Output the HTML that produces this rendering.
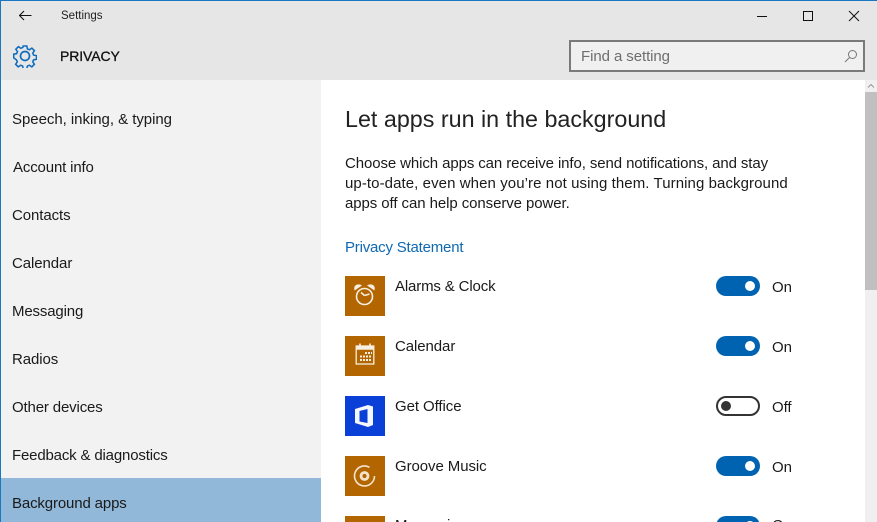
<!DOCTYPE html>
<html><head><meta charset="utf-8"><style>
html,body{margin:0;padding:0;width:877px;height:522px;overflow:hidden;background:#fff}
body{position:relative;font-family:"Liberation Sans",sans-serif;color:#1a1a1a}
div,span,svg{position:absolute}
.t{white-space:nowrap;line-height:20px;font-size:15px;letter-spacing:-.08px}
.n{left:12px}
.i{left:345px;width:40px;height:40px;background:#b36500}
.a{left:395px}
.s{left:716px;width:44px;height:20px;border-radius:10px;background:#0063b1}
.s i{position:absolute;left:29px;top:5px;width:10px;height:10px;border-radius:5px;background:#fff}
.l{left:772px}
</style></head><body>
<div style="left:0;top:0;width:877px;height:522px;overflow:hidden">
<div style="left:0;top:0;width:877px;height:80px;background:#e6e6e6"></div>
<div style="left:0;top:80px;width:321px;height:442px;background:#f2f2f2"></div>
<div style="left:0;top:478px;width:321px;height:44px;background:#91b8d9"></div>
<div style="left:0;top:0;width:877px;height:1px;background:#1a78c2"></div>
<div style="left:0;top:0;width:1px;height:522px;background:#1a78c2"></div>

<svg style="left:19px;top:10px" width="13" height="11" viewBox="0 0 13 11" fill="none" stroke="#111" stroke-width="1.100"><path d="M.5 5.500H12.500M5 1L.5 5.500L5 10"/></svg>
<span class="t" style="left:61px;top:6px;font-size:11.500px;letter-spacing:0;color:#222">Settings</span>
<svg style="left:13px;top:44px" width="24" height="24" viewBox="0 0 24 24" fill="none" stroke="#0f6cbd" stroke-width="1.700"><path d="M10 1h4l.6 3.200 2.200.9 2.700-1.800 2.800 2.800-1.800 2.700.9 2.200 3.200.6v4l-3.200.6-.9 2.200 1.800 2.700-2.800 2.800-2.700-1.800-2.200.9-.6 3.200h-4l-.6-3.200-2.200-.9-2.700 1.800-2.800-2.800 1.800-2.700-.9-2.200L-.4 14v-4l3.200-.6.9-2.200-1.800-2.700 2.800-2.800 2.700 1.800 2.200-.9z" transform="translate(1.100 1.100) scale(.91)"/><circle cx="12" cy="12" r="4.500"/></svg>
<span class="t" style="left:60px;top:46px;font-size:14px;letter-spacing:-.1px;color:#111;-webkit-text-stroke:.3px #111">PRIVACY</span>

<svg style="left:757px;top:10px" width="110" height="14" viewBox="0 0 110 14" fill="none" stroke="#111" stroke-width="1"><path d="M0 6.500H10"/><rect x="46.500" y="1.500" width="9" height="9"/><path d="M92 1L102 11M102 1L92 11"/></svg>

<div style="left:569px;top:40px;width:292px;height:28px;border:2px solid #7a7a7a;background:#f0f0f0"></div>
<span class="t" style="left:581px;top:47px;color:#6e6e6e">Find a setting</span>
<svg style="left:844px;top:49px" width="15" height="14" viewBox="0 0 15 14" fill="none" stroke="#777" stroke-width="1"><circle cx="8.500" cy="5.500" r="4"/><path d="M5.500 8.500L1 13"/></svg>

<span class="t n" style="top:110px;letter-spacing:-.04px">Speech, inking, &amp; typing</span>
<span class="t n" style="top:158px;left:13px;letter-spacing:-.15px">Account info</span>
<span class="t n" style="top:206px">Contacts</span>
<span class="t n" style="top:254px">Calendar</span>
<span class="t n" style="top:302px;letter-spacing:-.15px">Messaging</span>
<span class="t n" style="top:350px">Radios</span>
<span class="t n" style="top:398px;letter-spacing:-.15px">Other devices</span>
<span class="t n" style="top:446px;letter-spacing:-.17px">Feedback &amp; diagnostics</span>
<span class="t n" style="top:494px;letter-spacing:-.14px">Background apps</span>

<span class="t" style="left:345px;top:105px;line-height:28px;font-size:23.300px;letter-spacing:0;color:#222">Let apps run in the background</span>
<span class="t" style="left:345px;top:154px;letter-spacing:-.1px">Choose which apps can receive info, send notifications, and stay</span>
<span class="t" style="left:345px;top:174px;letter-spacing:.08px">up-to-date, even when you’re not using them. Turning background</span>
<span class="t" style="left:345px;top:194px">apps off can help conserve power.</span>
<span class="t" style="left:345px;top:238px;color:#0f68b4;letter-spacing:-.2px">Privacy Statement</span>

<div class="i" style="top:276px"></div>
<svg style="left:345px;top:276px" width="40" height="40" viewBox="0 0 40 40" fill="none" stroke="#f8efe3" stroke-width="1.600"><circle cx="19.500" cy="20.500" r="8"/><path d="M19.500 19.500l-3.500-3M19.500 19.500l5-1.500"/><path d="M9.500 14.500C8 9 13 7 17 9.500zM29.500 14.500C31 9 26 7 22 9.500z" fill="#f8efe3" stroke="none"/></svg>
<span class="t a" style="top:277px;letter-spacing:-.15px">Alarms &amp; Clock</span>
<div class="s" style="top:276px"><i></i></div>
<span class="t l" style="top:278px">On</span>

<div class="i" style="top:336px"></div>
<svg style="left:345px;top:336px" width="40" height="40" viewBox="0 0 40 40" fill="none" stroke="#f8efe3" stroke-width="1.300"><rect x="11.200" y="10" width="17.600" height="18"/><path d="M11 12h18" stroke-width="3.500"/><path d="M15 7.500v3M25 7.500v3" stroke-width="1.600"/><path d="M20 17h7M15 20.500h12M15 24h12" stroke-width="2" stroke-dasharray="2 1"/></svg>
<span class="t a" style="top:337px">Calendar</span>
<div class="s" style="top:336px"><i></i></div>
<span class="t l" style="top:338px">On</span>

<div class="i" style="top:396px;background:#0a3fd8"></div>
<svg style="left:345px;top:396px" width="40" height="40" viewBox="0 0 40 40"><path fill-rule="evenodd" fill="#f4f7ff" d="M10 13L23 9L28 10.500V29L23 31L10 27ZM14.500 15L22.500 13V27L14.500 25.500Z"/></svg>
<span class="t a" style="top:397px">Get Office</span>
<div class="s" style="top:396px;width:40px;height:16px;background:#fff;border:2px solid #333"><i style="left:3px;top:3px;background:#333"></i></div>
<span class="t l" style="top:398px">Off</span>

<div class="i" style="top:456px"></div>
<svg style="left:345px;top:456px" width="40" height="40" viewBox="0 0 40 40" fill="none" stroke="#f3e3cd"><path stroke-width="1.600" d="M24.500 11.300A10 10 0 1 0 29.500 20"/><circle cx="19.500" cy="20" r="3.500" stroke-width="2.800"/></svg>
<span class="t a" style="top:457px">Groove Music</span>
<div class="s" style="top:456px"><i></i></div>
<span class="t l" style="top:458px">On</span>

<div style="left:0;top:516px;width:865px;height:6px;overflow:hidden">
<div class="i" style="top:0"></div>
<span class="t a" style="top:0">Messaging</span>
<div class="s" style="top:0"><i></i></div>
<span class="t l" style="top:0">On</span>
</div>

<div style="left:865px;top:80px;width:12px;height:442px;background:#f0f0f0"></div>
<div style="left:865px;top:92px;width:12px;height:198px;background:#c0c0c0"></div>
<svg style="left:865px;top:80px" width="12" height="12" viewBox="0 0 12 12" fill="none" stroke="#9a9a9a"><path d="M3 7.500L6 4.500L9 7.500"/></svg>
</div>
</body></html>
